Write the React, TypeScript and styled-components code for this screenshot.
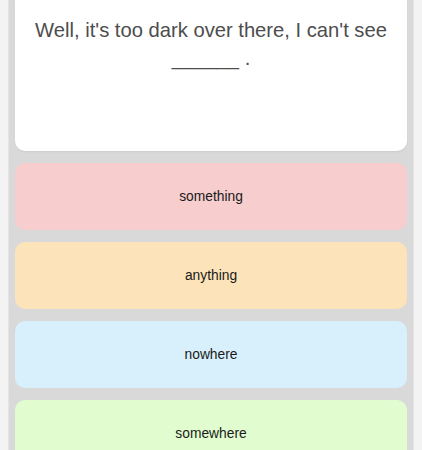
import styled, { createGlobalStyle } from "styled-components";

const GlobalStyle = createGlobalStyle`
  html, body {
    margin: 0;
    padding: 0;
    background: #f3f3f3;
    font-family: "Liberation Sans", Arial, sans-serif;
  }
`;

const Panel = styled.div`
  width: 392px;
  min-height: 450px;
  margin: 0 auto;
  padding: 0 6px 12px;
  background: #d9d9d9;
  border-left: 1px solid #e4e4e4;
  border-right: 1px solid #e4e4e4;
  display: flex;
  flex-direction: column;
  gap: 12px;
`;

const QuestionCard = styled.div`
  background: #ffffff;
  border-radius: 0 0 10px 10px;
  height: 151px;
  padding: 16px 14px 0;
  box-sizing: border-box;
  box-shadow: 0 1px 2px rgba(0, 0, 0, 0.06);
`;

const QuestionText = styled.p`
  margin: 0;
  font-size: 20.2px;
  line-height: 28px;
  color: #4d4d4d;
  text-align: center;
`;

const Blank = styled.span`
  white-space: nowrap;
`;

const OptionList = styled.div`
  display: flex;
  flex-direction: column;
  gap: 12px;
`;

const OptionButton = styled.div<{ $bg: string }>`
  height: 67px;
  border-radius: 10px;
  background: ${(props) => props.$bg};
  display: flex;
  align-items: center;
  justify-content: center;
  font-size: 13.8px;
  color: #1a1a1a;
`;

const options = [
  { label: "something", bg: "#f7cdcd" },
  { label: "anything", bg: "#fce3b9" },
  { label: "nowhere", bg: "#d8f0fb" },
  { label: "somewhere", bg: "#e1fdd0" },
];

const App = () => {
  return (
    <>
      <GlobalStyle />
      <Panel>
        <QuestionCard>
          <QuestionText>
            Well, it's too dark over there, I can't see <Blank>______ .</Blank>
          </QuestionText>
        </QuestionCard>
        <OptionList>
          {options.map((option) => (
            <OptionButton key={option.label} $bg={option.bg}>
              {option.label}
            </OptionButton>
          ))}
        </OptionList>
      </Panel>
    </>
  );
};

export default App;
